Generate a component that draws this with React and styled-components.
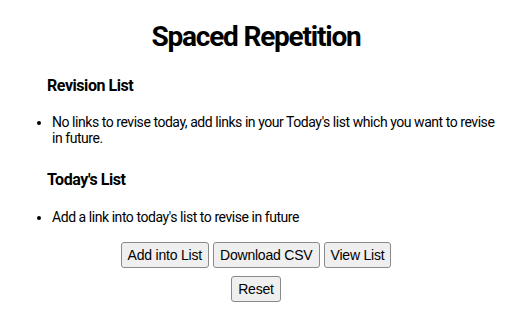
import styled, { createGlobalStyle } from 'styled-components';

const GlobalStyle = createGlobalStyle`
  html, body {
    margin: 0;
    padding: 0;
    background: #fff;
  }
  body {
    font-family: Roboto, "Liberation Sans", Arial, sans-serif;
    color: #000;
  }
`;

const Page = styled.div`
  width: 512px;
  padding: 0 8px;
  box-sizing: border-box;
  display: flex;
  flex-direction: column;
`;

const Title = styled.h1`
  margin: 20px 0 0 0;
  font-size: 28px;
  font-weight: 700;
  line-height: 33px;
  text-align: center;
  letter-spacing: -1.2px;
`;

const Section = styled.section`
  display: flex;
  flex-direction: column;
  margin-top: ${(p) => p.$top}px;
`;

const Heading = styled.h3`
  margin: 0 0 0 39px;
  font-size: 16px;
  font-weight: 700;
  line-height: 19px;
  letter-spacing: -0.45px;
`;

const List = styled.ul`
  margin: ${(p) => p.$gap}px 0 0 0;
  padding-left: 44px;
  font-size: 14px;
  line-height: 16px;
  letter-spacing: -0.45px;
`;

const Item = styled.li`
  padding-right: 4px;
`;

const Actions = styled.div`
  margin-top: 17px;
  display: flex;
  flex-direction: column;
  align-items: center;
  gap: 8px;
`;

const ButtonRow = styled.div`
  display: flex;
  justify-content: center;
  gap: 4px;
`;

const Button = styled.button`
  height: 26px;
  padding: 0 6px;
  font-family: "Liberation Sans", Arial, sans-serif;
  font-size: 14px;
  letter-spacing: -0.2px;
  color: #000;
  background: #efefef;
  border: 1px solid #8a8a8a;
  border-radius: 3px;
  cursor: pointer;
`;

export default function App() {
  return (
    <>
      <GlobalStyle />
      <Page>
        <Title>Spaced Repetition</Title>
        <Section $top={23}>
          <Heading>Revision List</Heading>
          <List $gap={19}>
            <Item>
              No links to revise today, add links in your Today's list which you
              want to revise in future.
            </Item>
          </List>
        </Section>
        <Section $top={24}>
          <Heading>Today's List</Heading>
          <List $gap={20}>
            <Item>Add a link into today's list to revise in future</Item>
          </List>
        </Section>
        <Actions>
          <ButtonRow>
            <Button>Add into List</Button>
            <Button>Download CSV</Button>
            <Button>View List</Button>
          </ButtonRow>
          <ButtonRow>
            <Button>Reset</Button>
          </ButtonRow>
        </Actions>
      </Page>
    </>
  );
}
